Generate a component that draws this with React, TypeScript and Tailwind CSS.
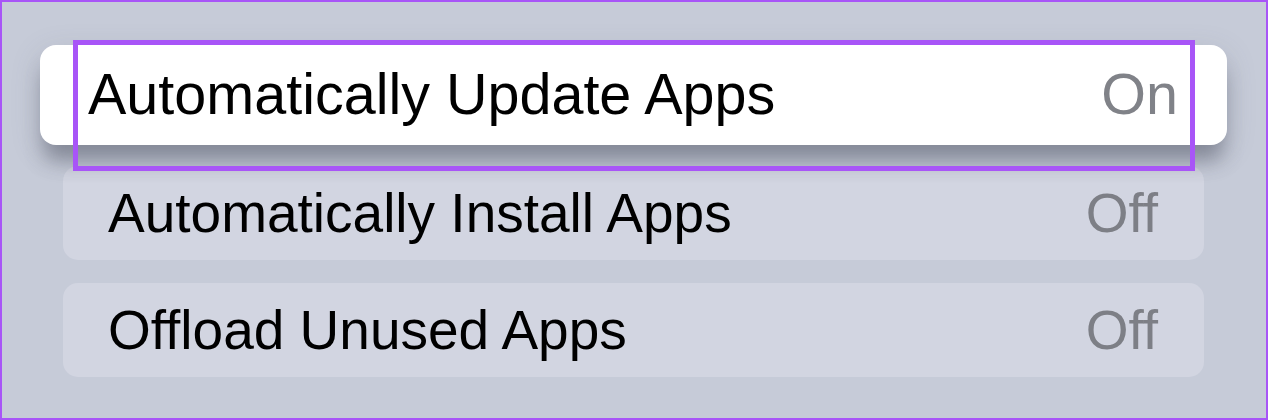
const rows = [
  { label: "Automatically Install Apps", value: "Off" },
  { label: "Offload Unused Apps", value: "Off" },
];

export default function App() {
  return (
    <div className="relative h-[420px] w-[1268px] overflow-hidden border-2 border-[#a855f7] bg-[#c6cbd8] font-['Liberation_Sans',Arial,sans-serif]">
      <div className="flex flex-col pl-[61px] pt-[43px]">
        <div className="relative z-10 -ml-[23px] flex h-[100px] w-[1187px] items-center justify-between rounded-[16px] bg-white pl-[48px] pr-[49px] shadow-[0_20px_20px_-4px_rgba(70,76,92,0.45),0_8px_30px_rgba(90,96,112,0.18)]">
          <span className="text-[57.5px] leading-none text-black">Automatically Update Apps</span>
          <span className="text-[57.5px] leading-none text-[#808288]">On</span>
        </div>

        <div className="mt-[21px] flex flex-col gap-[23px]">
          {rows.map((row) => (
            <div
              key={row.label}
              className="flex h-[94px] w-[1141px] items-center justify-between rounded-[15px] bg-[#d2d5e1] pl-[45px] pr-[46px]"
            >
              <span className="text-[55px] leading-none text-black">{row.label}</span>
              <span className="text-[55px] leading-none text-[#7d7f86]">{row.value}</span>
            </div>
          ))}
        </div>
      </div>

      {/* annotation frame */}
      <div className="absolute left-[71px] top-[38px] z-20 h-[131px] w-[1122px] border-[5px] border-[#a855f7]" />
    </div>
  );
}
